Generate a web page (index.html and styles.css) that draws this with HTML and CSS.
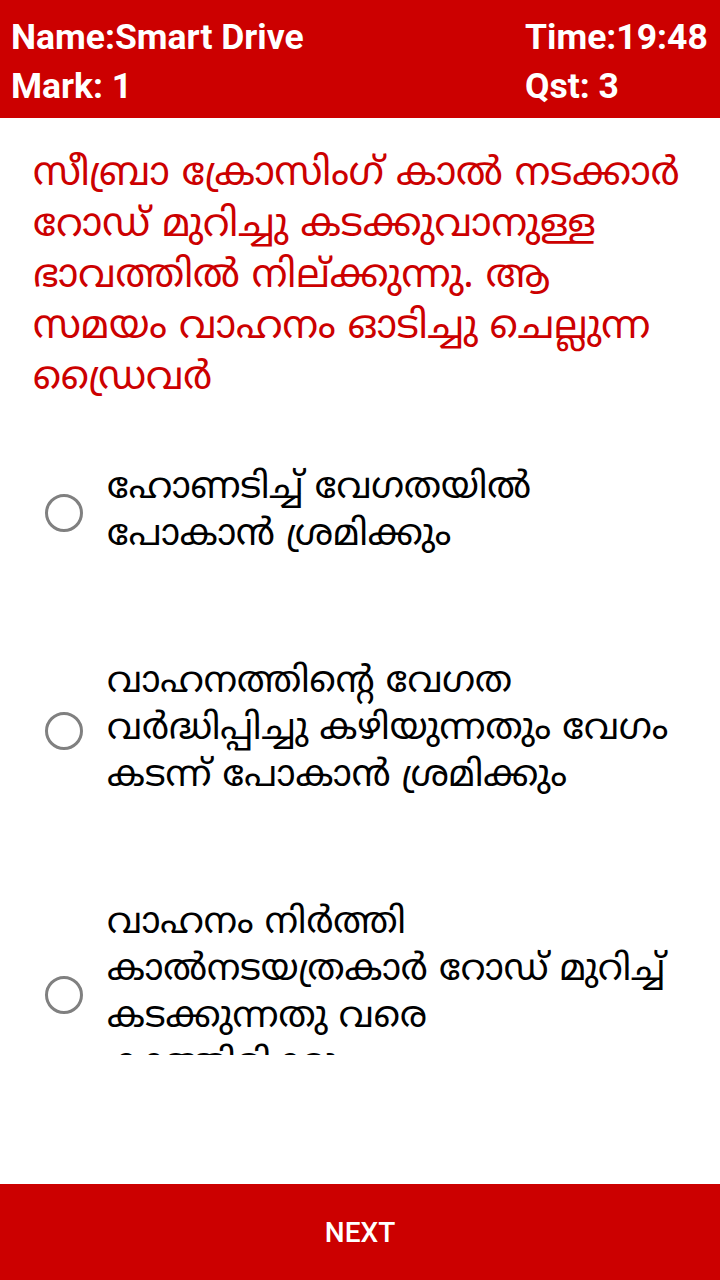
FILE: index.html
```html
<!DOCTYPE html>
<html lang="ml">
<head>
<meta charset="utf-8">
<link rel="stylesheet" href="styles.css">
</head>
<body>
<div class="app">
  <header class="topbar">
    <div class="col left">
      <div class="info">Name:Smart Drive</div>
      <div class="info">Mark: 1</div>
    </div>
    <div class="col right">
      <div class="info">Time:19:48</div>
      <div class="info">Qst: 3</div>
    </div>
  </header>
  <main class="content">
    <p class="question">സീബ്രാ ക്രോസിംഗ് കാൽ നടക്കാർ റോഡ് മുറിച്ചു കടക്കുവാനുള്ള ഭാവത്തിൽ നില്ക്കുന്നു. ആ സമയം വാഹനം ഓടിച്ചു ചെല്ലുന്ന ഡ്രൈവർ</p>
    <div class="options">
      <div class="option">
        <span class="radio"></span>
        <span class="opt-text">ഹോണടിച്ച് വേഗതയിൽ പോകാൻ ശ്രമിക്കും</span>
      </div>
      <div class="option">
        <span class="radio"></span>
        <span class="opt-text">വാഹനത്തിന്റെ വേഗത വർദ്ധിപ്പിച്ചു കഴിയുന്നതും വേഗം കടന്ന് പോകാൻ ശ്രമിക്കും</span>
      </div>
      <div class="option">
        <span class="radio"></span>
        <span class="opt-text">വാഹനം നിർത്തി കാൽനടയത്രകാർ റോഡ് മുറിച്ച് കടക്കുന്നതു വരെ കാത്തിരിക്കും</span>
      </div>
    </div>
  </main>
  <button class="next">NEXT</button>
</div>
</body>
</html>
```
FILE: styles.css
```css
html, body {
  margin: 0;
  padding: 0;
  background: #ffffff;
}
.app {
  width: 720px;
  height: 1280px;
  display: flex;
  flex-direction: column;
  overflow: hidden;
}
.topbar {
  flex: none;
  height: 118px;
  background: #cc0000;
  display: flex;
  justify-content: space-between;
  padding: 0 12px 0 11px;
  box-sizing: border-box;
  font-family: Roboto, "Liberation Sans", sans-serif;
  font-weight: 700;
  color: #ffffff;
  font-size: 35.5px;
}
.col {
  display: flex;
  flex-direction: column;
  padding-top: 13px;
}
.col.right {
  width: 183px;
}
.info {
  line-height: 49px;
  height: 49px;
  white-space: nowrap;
}
.content {
  flex: 1;
  display: flex;
  flex-direction: column;
  overflow: hidden;
}
.question {
  flex: none;
  margin: 0;
  padding: 32px 28px 0 33px;
  font-family: "Noto Sans Malayalam", "Noto Sans", sans-serif;
  font-size: 39px;
  line-height: 51px;
  color: #cc0000;
}
.options {
  flex: none;
  height: 650px;
  overflow: hidden;
  padding-top: 11px;
  box-sizing: border-box;
}
.option {
  display: flex;
  align-items: center;
  padding: 50px 40px 50px 45px;
}
.radio {
  flex: none;
  width: 32px;
  height: 32px;
  border: 3px solid #808080;
  border-radius: 50%;
  margin-right: 24px;
}
.opt-text {
  font-family: "Noto Sans Malayalam", "Noto Sans", sans-serif;
  font-size: 36.5px;
  line-height: 47px;
  color: #000000;
}
.next {
  flex: none;
  height: 96px;
  margin-top: auto;
  border: none;
  background: #cc0000;
  color: #ffffff;
  font-family: Roboto, "Liberation Sans", sans-serif;
  font-weight: 500;
  font-size: 28px;
  padding: 0;
}
```
